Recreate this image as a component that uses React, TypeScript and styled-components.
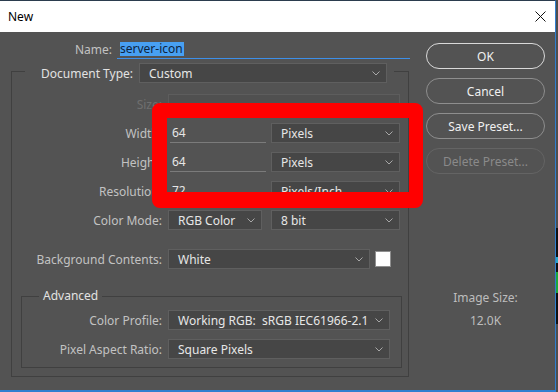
import React from "react";
import styled, { createGlobalStyle } from "styled-components";

const GlobalStyle = createGlobalStyle`
  html, body {
    margin: 0;
    padding: 0;
    width: 558px;
    height: 392px;
    overflow: hidden;
    background: #4e4e4e;
  }
  body {
    font-family: "Noto Sans", "Open Sans", sans-serif;
    font-size: 12px;
  }
  * { box-sizing: border-box; }
`;

const Screen = styled.div`
  position: relative;
  display: flex;
  width: 558px;
  height: 392px;
`;

const Window = styled.div`
  width: 556px;
  height: 392px;
  display: flex;
  flex-direction: column;
  background: #535353;
  border-top: 1px solid #2b3c4e;
  border-right: 1px solid #2f7fd0;
  border-bottom: 2px solid #2f7fd0;
`;

const TitleBar = styled.div`
  height: 31px;
  flex: none;
  background: #ffffff;
  display: flex;
  align-items: center;
  justify-content: space-between;
  padding: 0 9px 0 8px;
  color: #000;
  font-size: 12px;
`;

const Body = styled.div`
  flex: 1;
  display: flex;
`;

const LeftPane = styled.div`
  width: 416px;
  padding-top: 7px;
  display: flex;
  flex-direction: column;
`;

const Label = styled.span<{ $tone?: "dim" | "bright" | "normal" }>`
  text-align: right;
  white-space: nowrap;
  font-size: 12px;
  color: ${(p) =>
    p.$tone === "dim" ? "#6f6f6f" : p.$tone === "bright" ? "#e2e2e2" : "#c2c2c2"};
`;

const NameRow = styled.div`
  display: grid;
  grid-template-columns: 112px 293px;
  column-gap: 5px;
  height: 20px;
  align-items: center;
`;

const NameInput = styled.div`
  height: 20px;
  border-bottom: 1px solid #3d8fe8;
  display: flex;
  align-items: center;
  padding-left: 3px;
`;

const Selection = styled.span`
  background: #48a0f2;
  color: #0e2440;
  line-height: 14px;
  padding: 0 1px 0 0;
`;

const GroupBox = styled.div`
  margin: 12px 0 0 11px;
  width: 398px;
  border: 1px solid #404040;
  padding-bottom: 8px;
  display: flex;
  flex-direction: column;
`;

const GroupHeader = styled.div`
  margin: -9px 14px 0 13px;
  background: #535353;
  display: grid;
  grid-template-columns: 1fr 248px;
  column-gap: 6px;
  padding-right: 7px;
  height: 20px;
  align-items: center;
`;

const RowStack = styled.div<{ $top: number }>`
  margin-top: ${(p) => p.$top}px;
  display: flex;
  flex-direction: column;
  gap: 9px;
`;

const Row = styled.div<{ $labelWidth: number; $top?: number }>`
  display: grid;
  grid-template-columns: ${(p) => p.$labelWidth}px auto;
  column-gap: 6px;
  height: 20px;
  align-items: center;
  margin-top: ${(p) => p.$top ?? 0}px;
`;

const Fields = styled.div<{ $gap: number }>`
  display: flex;
  align-items: center;
  gap: ${(p) => p.$gap}px;
`;

const SelectBox = styled.div<{ $w: number }>`
  width: ${(p) => p.$w}px;
  height: 20px;
  background: #464646;
  border: 1px solid #5f5f5f;
  display: flex;
  align-items: center;
  justify-content: space-between;
  padding: 0 6px 0 9px;
  color: #e6e6e6;
  font-size: 12px;
  white-space: pre;
`;

const DisabledBox = styled.div<{ $w: number }>`
  width: ${(p) => p.$w}px;
  height: 19px;
  align-self: flex-start;
  border: 1px solid #5d5d5d;
  background: #505050;
`;

const NumInput = styled.div<{ $w: number }>`
  width: ${(p) => p.$w}px;
  margin-left: 2px;
  height: 20px;
  border-bottom: 1px solid #7b7b7b;
  display: flex;
  align-items: center;
  padding-left: 2px;
  color: #e6e6e6;
`;

const Swatch = styled.div`
  width: 16px;
  height: 16px;
  background: #ffffff;
  border: 1px solid #8f8f8f;
`;

const AdvancedBox = styled.div`
  margin: 27px 6px 0 9px;
  border: 1px solid #404040;
  padding-bottom: 8px;
  display: flex;
  flex-direction: column;
`;

const Legend = styled.span`
  align-self: flex-start;
  margin: -9px 0 0 17px;
  padding: 0 4px;
  height: 16px;
  line-height: 16px;
  background: #535353;
  color: #e2e2e2;
  font-size: 12px;
`;

const AdvancedStack = styled.div`
  margin-top: 6px;
  display: flex;
  flex-direction: column;
  gap: 9px;
`;

const RightPane = styled.div`
  margin-left: 10px;
  width: 119px;
  padding-top: 11px;
  display: flex;
  flex-direction: column;
  gap: 9px;
`;

const PillButton = styled.div<{ $kind: "default" | "normal" | "disabled" }>`
  height: 26px;
  border-radius: 13px;
  border: ${(p) =>
    p.$kind === "default"
      ? "1.5px solid #d9d9d9"
      : p.$kind === "disabled"
      ? "1px solid #646464"
      : "1px solid #8e8e8e"};
  color: ${(p) => (p.$kind === "disabled" ? "#8a8a8a" : "#f0f0f0")};
  display: flex;
  align-items: center;
  justify-content: center;
  font-size: 12px;
`;

const ImageSize = styled.div`
  margin-top: 107px;
  display: flex;
  flex-direction: column;
  align-items: center;
  gap: 7px;
  color: #bdbdbd;
  font-size: 12px;
  line-height: 16px;
`;

const DesktopStrip = styled.div`
  width: 2px;
  display: flex;
  flex-direction: column;
`;

const StripPart = styled.div<{ $h: number; $c: string }>`
  height: ${(p) => p.$h}px;
  background: ${(p) => p.$c};
`;

const RedMark = styled.div`
  position: absolute;
  left: 152px;
  top: 103px;
  width: 271px;
  height: 105px;
  border: 15px solid #ff0000;
  border-bottom-width: 16px;
  border-right-width: 14px;
  border-radius: 8px;
  pointer-events: none;
`;

const Chevron = () => (
  <svg width="8" height="5" viewBox="0 0 8 5">
    <polyline points="0.5,0.5 4,4 7.5,0.5" fill="none" stroke="#a8a8a8" strokeWidth="1" />
  </svg>
);

const CloseIcon = () => (
  <svg width="11" height="11" viewBox="0 0 11 11">
    <line x1="0.5" y1="0.5" x2="10.5" y2="10.5" stroke="#111" strokeWidth="1" />
    <line x1="10.5" y1="0.5" x2="0.5" y2="10.5" stroke="#111" strokeWidth="1" />
  </svg>
);

const Select = ({ w, value }: { w: number; value: string }) => (
  <SelectBox $w={w}>
    <span>{value}</span>
    <Chevron />
  </SelectBox>
);

export default function App() {
  return (
    <>
      <GlobalStyle />
      <Screen>
        <Window>
          <TitleBar>
            <span>New</span>
            <CloseIcon />
          </TitleBar>
          <Body>
            <LeftPane>
              <NameRow>
                <Label>Name:</Label>
                <NameInput>
                  <Selection>server-icon</Selection>
                </NameInput>
              </NameRow>

              <GroupBox>
                <GroupHeader>
                  <Label $tone="bright">Document Type:</Label>
                  <Select w={248} value="Custom" />
                </GroupHeader>

                <RowStack $top={11}>
                  <Row $labelWidth={150}>
                    <Label $tone="dim">Size:</Label>
                    <DisabledBox $w={232} />
                  </Row>
                  <Row $labelWidth={150}>
                    <Label>Width:</Label>
                    <Fields $gap={5}>
                      <NumInput $w={96}>64</NumInput>
                      <Select w={129} value="Pixels" />
                    </Fields>
                  </Row>
                  <Row $labelWidth={150}>
                    <Label>Height:</Label>
                    <Fields $gap={5}>
                      <NumInput $w={96}>64</NumInput>
                      <Select w={129} value="Pixels" />
                    </Fields>
                  </Row>
                  <Row $labelWidth={150}>
                    <Label>Resolution:</Label>
                    <Fields $gap={5}>
                      <NumInput $w={96}>72</NumInput>
                      <Select w={129} value="Pixels/Inch" />
                    </Fields>
                  </Row>
                  <Row $labelWidth={150}>
                    <Label>Color Mode:</Label>
                    <Fields $gap={9}>
                      <Select w={94} value="RGB Color" />
                      <Select w={129} value="8 bit" />
                    </Fields>
                  </Row>
                </RowStack>

                <Row $labelWidth={150} $top={19}>
                  <Label>Background Contents:</Label>
                  <Fields $gap={5}>
                    <Select w={202} value="White" />
                    <Swatch />
                  </Fields>
                </Row>

                <AdvancedBox>
                  <Legend>Advanced</Legend>
                  <AdvancedStack>
                    <Row $labelWidth={140}>
                      <Label>Color Profile:</Label>
                      <Select w={222} value="Working RGB:  sRGB IEC61966-2.1" />
                    </Row>
                    <Row $labelWidth={140}>
                      <Label>Pixel Aspect Ratio:</Label>
                      <Select w={222} value="Square Pixels" />
                    </Row>
                  </AdvancedStack>
                </AdvancedBox>
              </GroupBox>
            </LeftPane>

            <RightPane>
              <PillButton $kind="default">OK</PillButton>
              <PillButton $kind="normal">Cancel</PillButton>
              <PillButton $kind="normal">Save Preset...</PillButton>
              <PillButton $kind="disabled">Delete Preset...</PillButton>
              <ImageSize>
                <span>Image Size:</span>
                <span>12.0K</span>
              </ImageSize>
            </RightPane>
          </Body>
        </Window>
        <DesktopStrip>
          <StripPart $h={228} $c="#4e4e4e" />
          <StripPart $h={29} $c="#111111" />
          <StripPart $h={6} $c="#2aa8c8" />
          <StripPart $h={9} $c="#111111" />
          <StripPart $h={21} $c="#1fa83a" />
          <StripPart $h={31} $c="#111111" />
          <StripPart $h={68} $c="#4e4e4e" />
        </DesktopStrip>
        <RedMark />
      </Screen>
    </>
  );
}
